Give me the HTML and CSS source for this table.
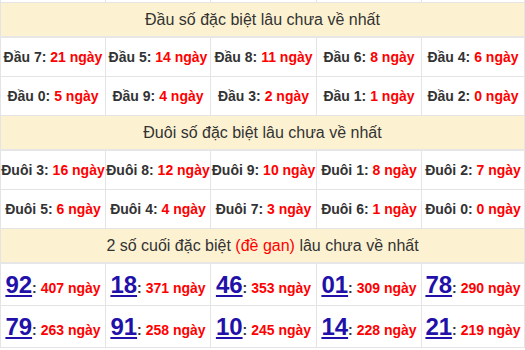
FILE: index.html
```html
<!DOCTYPE html>
<html lang="vi">
<head>
<meta charset="utf-8">
<link rel="stylesheet" href="styles.css">
</head>
<body>
<table class="gan">
  <colgroup><col class="c1"><col class="c2"><col class="c3"><col class="c4"><col class="c5"></colgroup>
  <tr class="stub"><td></td><td></td><td></td><td></td><td></td></tr>
  <tr class="head"><td colspan="5">Đầu số đặc biệt lâu chưa về nhất</td></tr>
  <tr class="row">
    <td>Đầu 7: <b>21 ngày</b></td><td>Đầu 5: <b>14 ngày</b></td><td>Đầu 8: <b>11 ngày</b></td><td>Đầu 6: <b>8 ngày</b></td><td>Đầu 4: <b>6 ngày</b></td>
  </tr>
  <tr class="row">
    <td>Đầu 0: <b>5 ngày</b></td><td>Đầu 9: <b>4 ngày</b></td><td>Đầu 3: <b>2 ngày</b></td><td>Đầu 1: <b>1 ngày</b></td><td>Đầu 2: <b>0 ngày</b></td>
  </tr>
  <tr class="head"><td colspan="5">Đuôi số đặc biệt lâu chưa về nhất</td></tr>
  <tr class="row">
    <td>Đuôi 3: <b>16 ngày</b></td><td>Đuôi 8: <b>12 ngày</b></td><td>Đuôi 9: <b>10 ngày</b></td><td>Đuôi 1: <b>8 ngày</b></td><td>Đuôi 2: <b>7 ngày</b></td>
  </tr>
  <tr class="row">
    <td>Đuôi 5: <b>6 ngày</b></td><td>Đuôi 4: <b>4 ngày</b></td><td>Đuôi 7: <b>3 ngày</b></td><td>Đuôi 6: <b>1 ngày</b></td><td>Đuôi 0: <b>0 ngày</b></td>
  </tr>
  <tr class="head"><td colspan="5">2 số cuối đặc biệt <span class="red">(đề gan)</span> lâu chưa về nhất</td></tr>
  <tr class="row big">
    <td><a class="num">92</a>: <b>407 ngày</b></td><td><a class="num">18</a>: <b>371 ngày</b></td><td><a class="num">46</a>: <b>353 ngày</b></td><td><a class="num">01</a>: <b>309 ngày</b></td><td><a class="num">78</a>: <b>290 ngày</b></td>
  </tr>
  <tr class="row big">
    <td><a class="num">79</a>: <b>263 ngày</b></td><td><a class="num">91</a>: <b>258 ngày</b></td><td><a class="num">10</a>: <b>245 ngày</b></td><td><a class="num">14</a>: <b>228 ngày</b></td><td><a class="num">21</a>: <b>219 ngày</b></td>
  </tr>
</table>
</body>
</html>
```

FILE: styles.css
```css
html, body {
  margin: 0;
  padding: 0;
  background: #fff;
}
.gan {
  width: 524px;
  border-collapse: collapse;
  table-layout: fixed;
  font-family: "Liberation Sans", Arial, sans-serif;
  color: #333;
  margin-top: -1px;
}
.c1, .c2, .c4 { width: 105px; }
.c3 { width: 106px; }
.c5 { width: 103px; }
.gan td {
  border: 1px solid #e4e4e4;
  text-align: center;
  padding: 0;
  white-space: nowrap;
}
.stub td {
  height: 2px;
}
.head td {
  background: #fcf2d1;
  font-size: 16px;
  height: 33px;
  color: #333;
  border-bottom: 2px solid #e6e6e6;
}
.row td {
  height: 38px;
  font-size: 14px;
  font-weight: bold;
  color: #333;
}
.row b {
  color: #f00;
}
.red {
  color: #f00;
}
.big td {
  height: 41px;
  font-size: 14px;
}
.big b {
  font-size: 14px;
}
.num {
  font-size: 24px;
  color: #2211a8;
  text-decoration: underline;
  text-underline-offset: 2px;
}
```
